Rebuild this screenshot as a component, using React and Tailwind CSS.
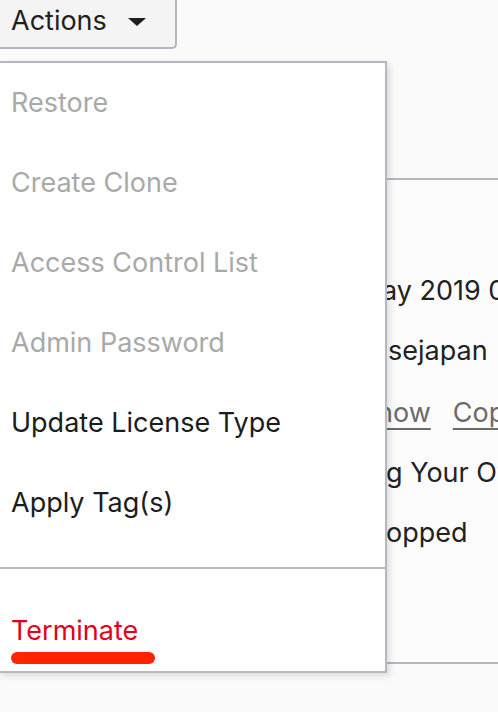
import React from 'react';

const items = [
  { label: 'Restore', disabled: true },
  { label: 'Create Clone', disabled: true },
  { label: 'Access Control List', disabled: true },
  { label: 'Admin Password', disabled: true },
  { label: 'Update License Type' },
  { label: 'Apply Tag(s)' },
];

const CardLine = ({ hidden, children, className = '' }) => (
  <div className={`flex h-[60px] items-center whitespace-nowrap ${className}`}>
    <span className="w-[186px] shrink-0 overflow-hidden text-right">{hidden}</span>
    {children}
  </div>
);

export default function App() {
  return (
    <div className="relative h-[712px] w-[498px] overflow-hidden bg-[#fafafa] font-['Inter',sans-serif] text-[27px]">
      {/* Actions button */}
      <button className="-ml-[2px] flex h-[49px] w-[179px] items-center rounded-br-[5px] border-2 border-t-0 border-[#b3b8c0] bg-[#f4f4f4] pl-[11px] pb-[6px] text-[#1f1f1f]">
        <span className="leading-none">Actions</span>
        <svg className="ml-[21px] mt-[3px]" width="18" height="8" viewBox="0 0 18 8">
          <path d="M0 0 H18 L9 8 Z" fill="#1f1f1f" />
        </svg>
      </button>

      {/* background card */}
      <div className="ml-[200px] mt-[129px] h-[486px] w-[400px] border-y-2 border-[#b3b8c0] bg-[#fcfcfc] pt-[81px] text-[#222]">
        <CardLine hidden="Created: 14 M">
          <span className="-ml-[4px]">ay 2019 09:12:33 UTC</span>
        </CardLine>
        <CardLine hidden="Compartment: oracl">
          <span className="ml-[2px]">sejapan</span>
        </CardLine>
        <CardLine hidden="OCID: ...xk7a S" className="mt-[2px]">
          <span className="-ml-[9px] text-[#6b6b6b] underline decoration-[2px] underline-offset-[6px]">how</span>
          <span className="ml-[22px] text-[#6b6b6b] underline decoration-[2px] underline-offset-[6px]">Copy</span>
        </CardLine>
        <CardLine hidden="License: Brin">
          <span>g Your Own License</span>
        </CardLine>
        <CardLine hidden="Status: St">
          <span>opped</span>
        </CardLine>
      </div>

      {/* dropdown menu */}
      <div className="absolute left-[-2px] top-[61px] w-[389px] border-2 border-[#b4b9c1] bg-white shadow-[3px_3px_6px_rgba(0,0,0,0.12)]">
        <ul className="pb-[24px]">
          {items.map((it) => (
            <li
              key={it.label}
              className={`flex h-[80px] items-center pl-[11px] ${it.disabled ? 'text-[#a9a9a9]' : 'text-[#1c1c1c]'}`}
            >
              {it.label}
            </li>
          ))}
        </ul>
        <div className="border-t-2 border-[#b4b9c1] pl-[11px] pt-[46px] pb-[7px]">
          <div className="leading-[32px] text-[#e2001a]">Terminate</div>
          <div className="mt-[5px] h-[12px] w-[144px] rounded-full bg-[#ff2400]" />
        </div>
      </div>
    </div>
  );
}
